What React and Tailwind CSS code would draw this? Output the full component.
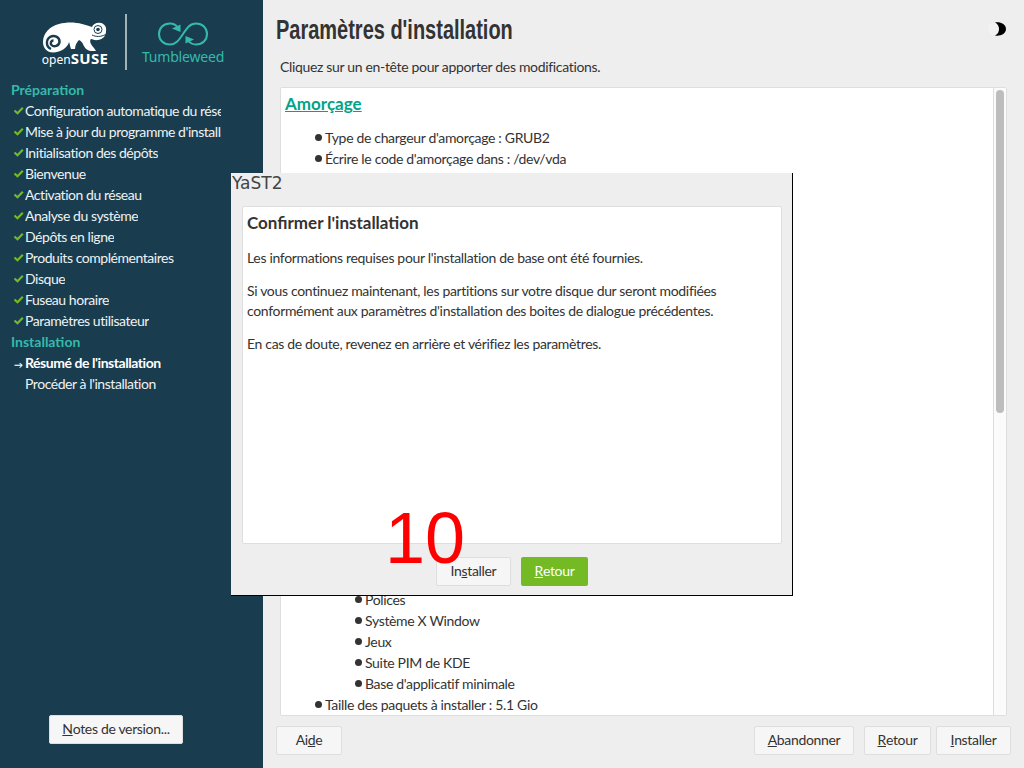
const FONT = "font-['Lato','Noto_Sans',sans-serif] tracking-[-0.33px]";

const prep = [
  'Configuration automatique du réseau',
  "Mise à jour du programme d'installation",
  'Initialisation des dépôts',
  'Bienvenue',
  'Activation du réseau',
  'Analyse du système',
  'Dépôts en ligne',
  'Produits complémentaires',
  'Disque',
  'Fuseau horaire',
  'Paramètres utilisateur',
];

const patterns = ['Polices', 'Système X Window', 'Jeux', 'Suite PIM de KDE', "Base d'applicatif minimale"];

function Check() {
  return (
    <svg width="11" height="11" viewBox="0 0 11 11" className="shrink-0">
      <path d="M0.500 5.500 L3.500 8.200 L8.800 2.800" fill="none" stroke="#73ba25" strokeWidth="2.2" />
    </svg>
  );
}

function StepRow({ label, icon, active }) {
  return (
    <div className={`flex h-[21px] items-center pl-[14px] ${active ? 'font-bold text-white' : 'text-[#eef2f3]'}`}>
      <div className="w-[11px] shrink-0">{icon}</div>
      <div className="overflow-hidden whitespace-nowrap">{label}</div>
    </div>
  );
}

function Logo() {
  return (
    <div className="flex h-[79px] pt-[14px] tracking-normal">
      <div className="ml-[41px] flex w-[68px] flex-col items-center">
        <svg width="66" height="32" viewBox="0 0 66 32" className="mt-[7px]">
          <path
            d="M1 21 C1 12 8 5 17 3 C24 1 33 1 40 3 C44 4 47 5 50 6 C51 3 55 1 59 2 C62 2.500 65 6 64 10 C64 14 62 18 56 19 C53 19.500 51 18.500 49 18 C47 20 49 24 52 27 L54 30 L49 30 C45 30 42 26 41 23 C40 21 39 20 37 19 C35 21 33 24 33 28 L29 28 C28 26 28 23 27 21 C26 26 19 31.500 11 31.500 C5 31.500 1 27 1 21 Z"
            fill="#fff"
          />
          <path
            d="M9 28 C4 26 3.500 19 8 16 C12 13.500 18 16 17.500 21 C17 25 12 26.500 9.500 24 C8 22 9 19.500 11.500 19.500"
            fill="none"
            stroke="#193d4f"
            strokeWidth="2.400"
          />
          <circle cx="56" cy="8.500" r="4" fill="none" stroke="#193d4f" strokeWidth="1" />
          <circle cx="56" cy="8.500" r="1.800" fill="#193d4f" />
          <path d="M50 14 C54 16 59 16 63.500 13.500" fill="none" stroke="#193d4f" strokeWidth="1" />
        </svg>
        <div className="-mt-[2px] flex items-baseline whitespace-nowrap text-white">
          <span className="font-['Noto_Sans',sans-serif] text-[12px] leading-[14px]">open</span>
          <span className="font-['Noto_Sans',sans-serif] text-[15px] font-bold leading-[14px] tracking-[0.3px]">SUSE</span>
        </div>
      </div>
      <div className="ml-[16px] h-[56px] w-[2px] bg-[#a3b1b8]" />
      <div className="ml-[15px] flex w-[82px] flex-col items-center">
        <svg width="50" height="24" viewBox="0 0 50 24" className="mt-[8px]">
          <path
            d="M20 5.500 C18 3 15 1.500 12 1.500 C5.500 1.500 1 6 1 12 C1 18 5.500 22.500 12 22.500 C18 22.500 21 18 25 12 C29 6 32 1.500 38 1.500 C44.500 1.500 49 6 49 12 C49 18 44.500 22.500 38 22.500 C35 22.500 32 21 30 18.500"
            fill="none"
            stroke="#35b9ab"
            strokeWidth="2"
          />
          <path d="M22.500 10 L14 6.500 L22.500 2.500 Z" fill="#35b9ab" />
          <path d="M27.500 14 L36 17.500 L27.500 21.500 Z" fill="#35b9ab" />
        </svg>
        <div className="mt-[2px] whitespace-nowrap font-['Noto_Sans',sans-serif] text-[14px] leading-[18px] tracking-[-0.2px] text-[#35b9ab]">
          Tumbleweed
        </div>
      </div>
    </div>
  );
}

function Btn({ children, className = '' }) {
  return (
    <button className={`flex h-[29px] items-center justify-center rounded-[2px] border border-[#dedede] bg-[#f6f6f6] pb-[2px] text-[14px] text-[#333] ${className}`}>
      {children}
    </button>
  );
}

function Sidebar() {
  return (
    <aside className="flex h-full w-[263px] shrink-0 flex-col bg-[#193d4f] text-[14px]">
      <Logo />
      <div className="w-[221px] tracking-[-0.45px]">
        <div className="flex h-[21px] items-center pl-[11px] font-bold tracking-normal text-[#35b9ab]">Préparation</div>
        {prep.map((s) => (
          <StepRow key={s} label={s} icon={<Check />} />
        ))}
        <div className="flex h-[21px] items-center pl-[11px] font-bold tracking-normal text-[#35b9ab]">Installation</div>
        <StepRow label="Résumé de l'installation" active icon={<span className="text-[9px] leading-none">→</span>} />
        <StepRow label="Procéder à l'installation" />
      </div>
      <div className="mt-auto mb-[24px] ml-[49px]">
        <Btn className="w-[134px]">
          <u>N</u>otes de version...
        </Btn>
      </div>
    </aside>
  );
}

function Bullet({ children, indent }) {
  return (
    <div className={`flex h-[21px] items-center whitespace-nowrap ${indent}`}>
      <span className="mr-[3px] h-[7px] w-[7px] rounded-full bg-[#333]" />
      {children}
    </div>
  );
}

function Main() {
  return (
    <main className="relative flex h-full flex-1 flex-col bg-[#eeeeee] pl-[17px] pr-[13px] text-[#333]">
      <div className="flex h-[57px] items-center justify-between pt-[4px]">
        <h1 className="-ml-[4px] origin-left scale-x-[0.74] whitespace-nowrap font-['Liberation_Sans',sans-serif] text-[27px] font-bold leading-none tracking-normal text-[#333]">
          Paramètres d'installation
        </h1>
        <svg width="20" height="16" viewBox="0 0 20 16" className="mr-[4px] -mt-[4px] shrink-0">
          <circle cx="7" cy="8" r="6" fill="#f2f2f2" />
          <path d="M8 1.500 C13 0.500 19 3 19 8 C19 13 13 15.500 8 14.500 C11 13 12 10.500 12 8 C12 5.500 11 3 8 1.500 Z" fill="#000" />
        </svg>
      </div>
      <div className="h-[30px] text-[14px] leading-[20px]">Cliquez sur un en-tête pour apporter des modifications.</div>
      <div className="flex h-[629px] w-[727px] overflow-hidden rounded-[2px] border border-[#dedede] bg-white text-[14px]">
        <div className="flex-1 overflow-hidden pl-[4px]">
          <div className="mt-[5px] h-[30px] text-[17px] font-bold leading-[22px] tracking-normal text-[#00a489] underline">Amorçage</div>
          <div className="h-[4px]" />
          <Bullet indent="pl-[30px]">Type de chargeur d'amorçage : GRUB2</Bullet>
          <Bullet indent="pl-[30px]">Écrire le code d'amorçage dans : /dev/vda</Bullet>
          <div className="h-[420px]" />
          {patterns.map((p) => (
            <Bullet key={p} indent="pl-[70px]">{p}</Bullet>
          ))}
          <Bullet indent="pl-[30px]">Taille des paquets à installer : 5.1 Gio</Bullet>
        </div>
        <div className="w-[13px] shrink-0 border-l border-[#dedede] bg-[#fbfbfb] px-[2px] pt-[2px]">
          <div className="h-[323px] w-[8px] rounded-full bg-[#bdbdbd]" />
        </div>
      </div>
      <div className="mt-[10px] flex items-start">
        <Btn className="-ml-[4px] w-[66px]">Ai<u>d</u>e</Btn>
        <Btn className="ml-auto w-[100px]"><u>A</u>bandonner</Btn>
        <Btn className="ml-[10px] w-[67px]"><u>R</u>etour</Btn>
        <Btn className="ml-[5px] w-[75px]"><u>I</u>nstaller</Btn>
      </div>
    </main>
  );
}

function Dialog() {
  return (
    <div className="absolute left-[231px] top-[173px] flex h-[423px] w-[562px] flex-col border-r border-b border-black bg-[#eeeeee] text-[#333]">
      <div className="h-[33px] pl-[1px] font-['DejaVu_Sans',sans-serif] text-[17px] leading-[21px] tracking-normal text-[#444]">YaST2</div>
      <div className="ml-[11px] mr-[10px] h-[338px] rounded-[2px] border border-[#dedede] bg-white px-[4px] text-[14px]">
        <h2 className="mt-[5px] text-[17px] font-bold leading-[22px] tracking-normal">Confirmer l'installation</h2>
        <p className="mt-[13px] leading-[21px]">Les informations requises pour l'installation de base ont été fournies.</p>
        <p className="mt-[13px] leading-[20px]">
          Si vous continuez maintenant, les partitions sur votre disque dur seront modifiées
          <br />
          conformément aux paramètres d'installation des boites de dialogue précédentes.
        </p>
        <p className="mt-[13px] leading-[20px]">En cas de doute, revenez en arrière et vérifiez les paramètres.</p>
      </div>
      <div className="mt-[13px] flex pl-[205px]">
        <Btn className="w-[75px]">In<u>s</u>taller</Btn>
        <button className="ml-[10px] flex h-[29px] w-[67px] items-center justify-center rounded-[2px] bg-[#73ba25] pb-[2px] text-[14px] text-white">
          <u>R</u>etour
        </button>
      </div>
      <div className="absolute left-[154px] top-[325px] font-['Liberation_Sans',sans-serif] text-[72px] leading-[80px] tracking-normal text-[#ff0000]">10</div>
    </div>
  );
}

export default function App() {
  return (
    <div className={`relative flex h-[768px] w-[1024px] overflow-hidden ${FONT}`}>
      <Sidebar />
      <Main />
      <Dialog />
    </div>
  );
}
